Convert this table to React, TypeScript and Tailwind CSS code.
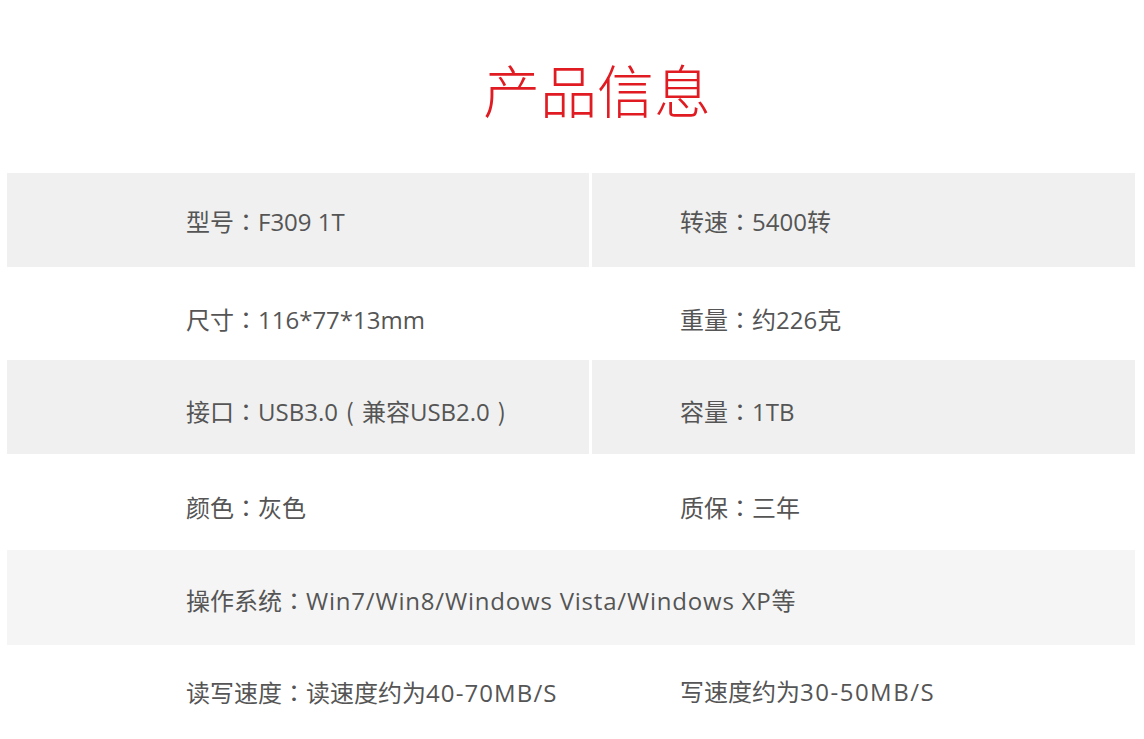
import React from "react";

const font = { fontFamily: '"Open Sans", "Noto Sans CJK SC", "Noto Sans", sans-serif' };

function P({ c }: { c: string }) {
  return (
    <span
      className="inline-block w-[1em] text-center"
      style={{ fontFamily: '"Noto Sans CJK TC", "Noto Sans CJK SC", sans-serif' }}
    >
      {c}
    </span>
  );
}

function Cell({ children, gray, left, pt }: { children?: React.ReactNode; gray?: boolean; left?: boolean; pt: string }) {
  return (
    <div
      className={`flex items-center ${pt} ${gray ? "bg-[#f0f0f0]" : ""} ${left ? "pl-[179px]" : "pl-[88px]"}`}
    >
      <div>{children}</div>
    </div>
  );
}

export default function App() {
  return (
    <div className="w-[1144px] h-[739px] bg-white overflow-hidden text-[#555555]" style={font}>
      <div className="h-[173px] flex justify-center pt-[52px] pl-[50px]">
        <h1
          className="text-[57px] leading-[72px] font-light text-[#e01b22]"
          style={{ fontFamily: '"Noto Sans CJK SC", sans-serif' }}
        >
          产品信息
        </h1>
      </div>
      <div className="ml-[7px] w-[1128px] text-[24px]">
        <div className="grid grid-cols-[582px_543px] gap-x-[3px] h-[94px]">
          <Cell gray left pt="pt-[2px]">型号<P c="：" />F309 1T</Cell>
          <Cell gray pt="pt-[2px]">转速<P c="：" />5400转</Cell>
        </div>
        <div className="grid grid-cols-[582px_543px] gap-x-[3px] h-[93px]">
          <Cell left pt="pt-[12px]">尺寸<P c="：" />116*77*13mm</Cell>
          <Cell pt="pt-[12px]">重量<P c="：" />约226克</Cell>
        </div>
        <div className="grid grid-cols-[582px_543px] gap-x-[3px] h-[94px]">
          <Cell gray left pt="pt-[8px]">接口<P c="：" />USB3.0<P c="(" />兼容USB2.0<P c=")" /></Cell>
          <Cell gray pt="pt-[8px]">容量<P c="：" />1TB</Cell>
        </div>
        <div className="grid grid-cols-[582px_543px] gap-x-[3px] h-[96px]">
          <Cell left pt="pt-[10px]">颜色<P c="：" />灰色</Cell>
          <Cell pt="pt-[10px]">质保<P c="：" />三年</Cell>
        </div>
        <div className="flex items-center h-[95px] bg-[#f5f5f5] pl-[179px] pt-[6px]">
          <div>
            操作系统<P c="：" />
            <span className="tracking-[0.8px]">Win7/Win8/Windows Vista/Windows XP</span>等
          </div>
        </div>
        <div className="grid grid-cols-[582px_543px] gap-x-[3px] h-[94px]">
          <Cell left pt="pt-[0px]">
            读写速度<P c="：" />读速度约为<span className="tracking-[1.1px]">40-70MB/S</span>
          </Cell>
          <Cell pt="pt-[0px]">
            写速度约为<span className="tracking-[1.5px]">30-50MB/S</span>
          </Cell>
        </div>
      </div>
    </div>
  );
}
